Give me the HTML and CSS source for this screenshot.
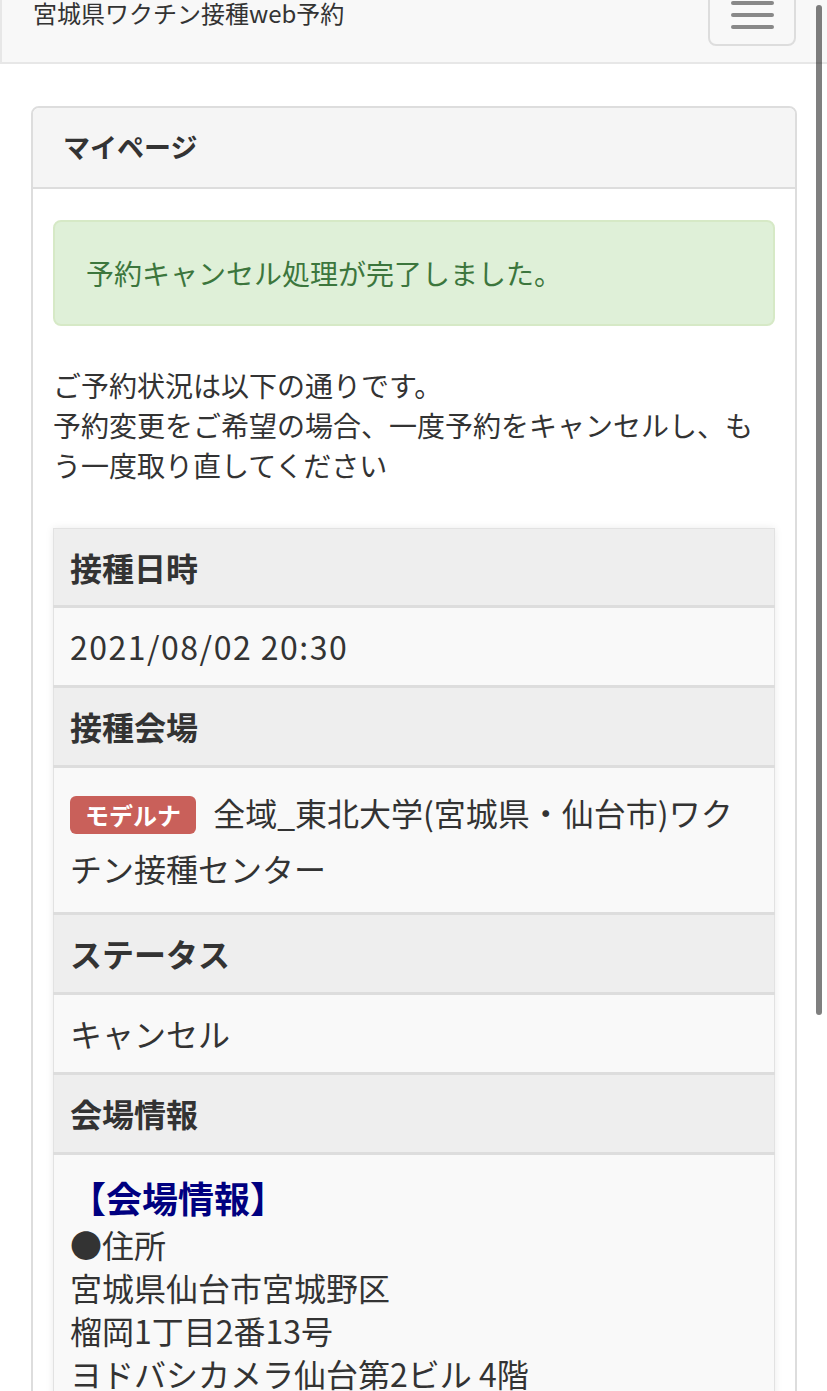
FILE: index.html
```html
<!DOCTYPE html>
<html lang="ja">
<head>
<meta charset="utf-8">
<title>宮城県ワクチン接種web予約</title>
<link rel="stylesheet" href="styles.css">
</head>
<body>
<nav class="navbar">
  <div class="brand">宮城県ワクチン接種web予約</div>
  <button class="toggle" type="button" aria-label="menu">
    <span class="bar"></span><span class="bar"></span><span class="bar"></span>
  </button>
</nav>
<main class="container">
  <section class="panel">
    <div class="panel-heading">マイページ</div>
    <div class="panel-body">
      <div class="alert">予約キャンセル処理が完了しました。</div>
      <p class="lead-text">ご予約状況は以下の通りです。<br>予約変更をご希望の場合、一度予約をキャンセルし、もう一度取り直してください</p>
      <table class="info-table">
        <tr><th>接種日時</th></tr>
        <tr><td class="date">2021/08/02 20:30</td></tr>
        <tr><th>接種会場</th></tr>
        <tr><td class="venue"><span class="badge">モデルナ</span> 全域_東北大学(宮城県・仙台市)ワクチン接種センター</td></tr>
        <tr><th>ステータス</th></tr>
        <tr><td>キャンセル</td></tr>
        <tr><th>会場情報</th></tr>
        <tr><td class="place"><span class="place-title">【会場情報】</span><br>●住所<br>宮城県仙台市宮城野区<br>榴岡1丁目2番13号<br>ヨドバシカメラ仙台第2ビル 4階<br>●アクセス<br>JR仙台駅東口より徒歩約3分</td></tr>
      </table>
    </div>
  </section>
</main>
<div class="scroll-indicator"></div>
</body>
</html>
```
FILE: styles.css
```css
html, body {
  margin: 0;
  padding: 0;
  background: #fff;
}
body {
  font-family: "Noto Sans CJK JP", "Noto Sans", sans-serif;
  color: #333;
  overflow: hidden;
}
.navbar {
  height: 62px;
  background: #f8f8f8;
  border-bottom: 2px solid #e7e7e7;
  border-left: 2px solid #e7e7e7;
  display: flex;
  justify-content: space-between;
  align-items: flex-start;
  padding: 0 31px 0 31px;
}
.brand {
  font-size: 24px;
  line-height: 26px;
  color: #333;
}
.toggle {
  margin-top: -16px;
  width: 88px;
  height: 62px;
  border: 2px solid #ddd;
  border-radius: 8px;
  background: transparent;
  padding: 15px 0 0 0;
  display: flex;
  flex-direction: column;
  align-items: center;
  gap: 8px;
}
.bar {
  display: block;
  width: 43px;
  height: 4px;
  border-radius: 2px;
  background: #888;
}
.container {
  padding: 42px 30px 0 31px;
}
.panel {
  border: 2px solid #ddd;
  border-radius: 8px;
  background: #fff;
}
.panel-heading {
  background: #f5f5f5;
  border-bottom: 2px solid #ddd;
  border-radius: 6px 6px 0 0;
  padding: 19px 30px 20px;
  font-size: 27px;
  line-height: 40px;
  font-weight: bold;
  color: #333;
}
.panel-body {
  padding: 31px 20px 0;
}
.alert {
  background: #dff0d8;
  border: 2px solid #d6e9c6;
  border-radius: 8px;
  color: #3c763d;
  font-size: 28px;
  line-height: 40px;
  padding: 31px 31px 31px;
}
.lead-text {
  margin: 39px 0 43px;
  font-size: 28px;
  line-height: 40px;
  color: #333;
}
.info-table {
  width: 100%;
  border-collapse: collapse;
  border: 1px solid #e2e2e2;
  box-shadow: 0 0 8px rgba(0, 0, 0, 0.08);
}
.info-table th,
.info-table td {
  text-align: left;
  padding: 16px 16px;
  font-size: 32px;
  line-height: 45px;
  border-top: 3px solid #ddd;
}
.info-table th {
  background: #eee;
  font-weight: bold;
  color: #333;
}
.info-table tr:first-child th {
  border-top: 1px solid #e2e2e2;
  padding-bottom: 15px;
}
.info-table td {
  background: #f9f9f9;
  font-weight: normal;
  color: #333;
}
.info-table td.date {
  letter-spacing: 1.5px;
}
.info-table td.venue {
  line-height: 56px;
}
.badge {
  display: inline-block;
  background: #c9605a;
  color: #fff;
  font-size: 24px;
  font-weight: bold;
  line-height: 38px;
  padding: 0 15px;
  border-radius: 6px;
  vertical-align: 1px;
  margin-right: 10px;
}
.info-table td.place {
  line-height: 43px;
}
.place-title {
  display: inline-block;
  color: #000080;
  font-weight: bold;
  font-size: 36px;
  line-height: 52px;
}
.scroll-indicator {
  position: fixed;
  top: 5px;
  right: 5px;
  width: 6px;
  height: 1010px;
  border-radius: 3px;
  background: rgba(0, 0, 0, 0.5);
}
```
